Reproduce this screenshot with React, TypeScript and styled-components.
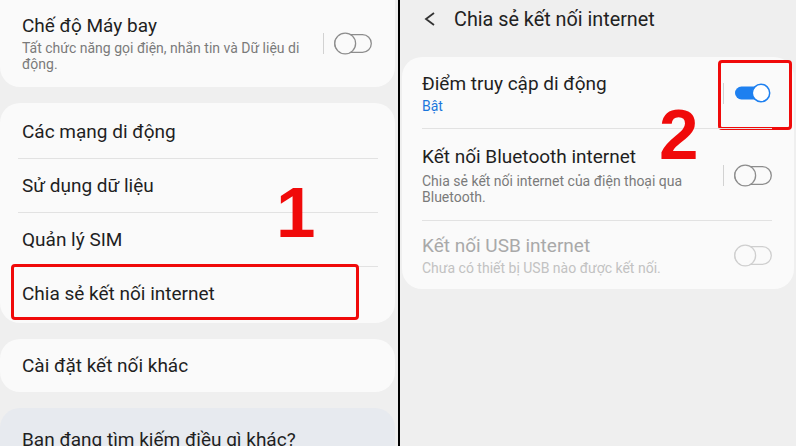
import React from 'react'
import styled, { createGlobalStyle } from 'styled-components'

const Global = createGlobalStyle`
  body {
    margin: 0;
    font-family: Roboto, "Noto Sans", sans-serif;
    background: #efefef;
  }
`

const Screen = styled.div`
  width: 796px;
  height: 446px;
  display: flex;
  overflow: hidden;
`

const Panel = styled.div`
  position: relative;
  flex: ${p => (p.$left ? '0 0 398px' : '1')};
  background: #efefef;
  display: flex;
  flex-direction: column;
  gap: 16px;
  padding: ${p => (p.$left ? '0 3px 0 0' : '0 2px')};
  box-sizing: border-box;
  overflow: hidden;
`

const Split = styled.div`
  flex: 0 0 2px;
  background: #000;
`

const Card = styled.div`
  position: relative;
  flex-shrink: 0;
  background: ${p => (p.$tint ? '#e7eaef' : '#fafafa')};
  border-radius: 20px;
  box-sizing: border-box;
`

const TopCard = styled(Card)`
  margin-top: -20px;
  padding: 34px 23px 15px 22px;
  display: flex;
  align-items: center;
`

const ListCard = styled(Card)`
  padding: 2px 0;
`

const ListRow = styled.div`
  position: relative;
  height: 54px;
  display: flex;
  align-items: center;
  padding: 0 22px;
  box-sizing: border-box;

  & + &::before {
    content: '';
    position: absolute;
    top: -1px;
    left: 18px;
    right: 17px;
    height: 1px;
    background: #e2e2e2;
  }
`

const SingleCard = styled(Card)`
  height: 53px;
  display: flex;
  align-items: center;
  padding: 0 22px;
`

const SearchCard = styled(Card)`
  height: 60px;
  padding: 20px 22px 0;
`

const Title = styled.div`
  font-size: 19px;
  line-height: 24px;
  color: ${p => (p.$muted ? '#a9a9a9' : '#1f1f1f')};
`

const Sub = styled.div`
  margin-top: ${p => p.$gap ?? 2}px;
  font-size: 14px;
  line-height: 16px;
  color: ${p => (p.$on ? '#1a76dc' : p.$muted ? '#c2c2c2' : '#7a7a7a')};
`

const TextCol = styled.div`
  flex: 1;
  min-width: 0;
  padding-right: 14px;
`

const Separator = styled.div`
  width: 1.5px;
  height: 21px;
  background: #d2d2d2;
  margin-right: 10px;
`

const Header = styled.div`
  height: 38px;
  flex-shrink: 0;
  display: flex;
  align-items: center;
  padding-left: 22px;
  gap: 18px;
  font-size: 19.8px;
  color: #222;
`

const DetailCard = styled(Card)`
  margin-top: 3px;
  padding: 0 22px 0 20px;
`

const DetailRow = styled.div`
  position: relative;
  display: flex;
  align-items: center;
  padding: ${p => p.$pad ?? '14px 0'};

  & + & {
    border-top: 1px solid #e2e2e2;
  }
`

const Mark = styled.div`
  position: absolute;
  border: 3px solid #f00a0a;
  border-radius: 4px;
  box-sizing: border-box;
  pointer-events: none;
`

const Step = styled.div`
  position: absolute;
  font-family: "Liberation Sans", Arial, sans-serif;
  font-weight: 700;
  font-size: 71px;
  line-height: 1;
  color: #f00a0a;
`

const Toggle = ({ on, muted }: { on?: boolean; muted?: boolean }) => {
  if (on) {
    return (
      <svg width="38" height="22" viewBox="0 0 38 22">
        <rect x="1" y="4.5" width="34" height="13" rx="6.5" fill="#1e80f0" />
        <circle cx="27" cy="11" r="8.7" fill="#fff" stroke="#1e80f0" strokeWidth="1.5" />
      </svg>
    )
  }
  const c = muted ? '#cfcfcf' : '#8d8d8d'
  return (
    <svg width="38" height="23" viewBox="0 0 38 23">
      <rect x="0.7" y="2.7" width="36.6" height="17.6" rx="8.8" fill="none" stroke={c} strokeWidth="1.3" />
      <circle cx="11.2" cy="11.5" r="10.4" fill="#fafafa" stroke={c} strokeWidth="1.3" />
    </svg>
  )
}

const Back = () => (
  <svg width="12" height="14" viewBox="0 0 12 14">
    <polyline points="10,1 2,7 10,13" fill="none" stroke="#333" strokeWidth="1.8" strokeLinejoin="miter" />
  </svg>
)

const menu = ['Các mạng di động', 'Sử dụng dữ liệu', 'Quản lý SIM', 'Chia sẻ kết nối internet']

const App = () => (
  <Screen>
    <Global />
    <Panel $left>
      <TopCard>
        <TextCol>
          <Title>Chế độ Máy bay</Title>
          <Sub>Tất chức năng gọi điện, nhắn tin và Dữ liệu di động.</Sub>
        </TextCol>
        <Separator />
        <Toggle />
      </TopCard>

      <ListCard>
        {menu.map((m, i) => (
          <ListRow key={m}>
            <Title>{m}</Title>
            {i === 3 && <Mark style={{ top: -3, left: 11, width: 348, height: 56 }} />}
          </ListRow>
        ))}
      </ListCard>

      <SingleCard>
        <Title>Cài đặt kết nối khác</Title>
      </SingleCard>

      <SearchCard $tint>
        <Title>Bạn đang tìm kiếm điều gì khác?</Title>
      </SearchCard>

      <Step style={{ left: 276, top: 177 }}>1</Step>
    </Panel>

    <Split />

    <Panel>
      <Header>
        <Back />
        <span>Chia sẻ kết nối internet</span>
      </Header>

      <DetailCard>
        <DetailRow $pad="15px 0 14px">
          <TextCol>
            <Title>Điểm truy cập di động</Title>
            <Sub $on>Bật</Sub>
          </TextCol>
          <Separator />
          <Toggle on />
          <Mark style={{ top: 3, left: 296, width: 74, height: 70 }} />
        </DetailRow>
        <DetailRow $pad="16px 0 15px">
          <TextCol>
            <Title>Kết nối Bluetooth internet</Title>
            <Sub $gap={4}>Chia sẻ kết nối internet của điện thoại qua Bluetooth.</Sub>
          </TextCol>
          <Separator />
          <Toggle />
        </DetailRow>
        <DetailRow $pad="13px 0">
          <TextCol>
            <Title $muted>Kết nối USB internet</Title>
            <Sub $muted>Chưa có thiết bị USB nào được kết nối.</Sub>
          </TextCol>
          <Toggle muted />
        </DetailRow>
      </DetailCard>

      <Step style={{ left: 259, top: 99 }}>2</Step>
    </Panel>
  </Screen>
)

export default App
